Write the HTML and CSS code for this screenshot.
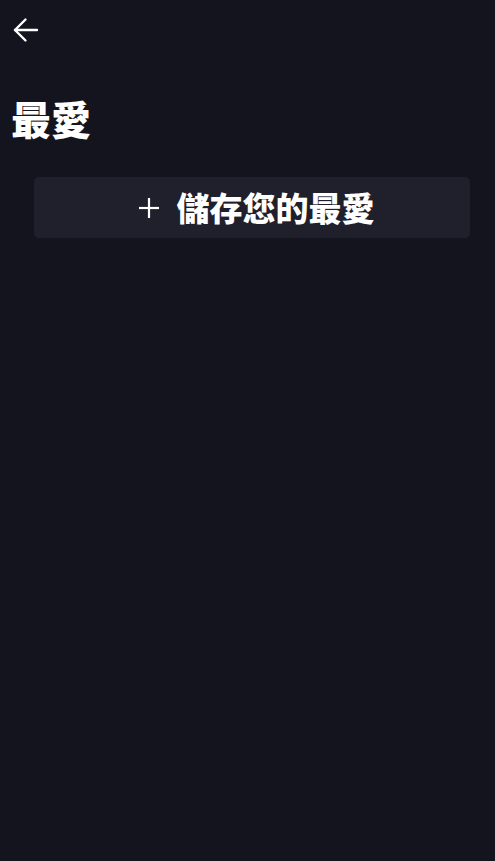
FILE: index.html
```html
<!DOCTYPE html>
<html lang="zh-Hant">
<head>
<meta charset="utf-8">
<title>最愛</title>
<link rel="stylesheet" href="styles.css">
</head>
<body>
<header class="top">
  <button class="back" aria-label="返回">
    <svg width="28" height="28" viewBox="0 0 28 28" fill="none" stroke="#ffffff" stroke-width="2.4" stroke-linecap="round" stroke-linejoin="round">
      <path d="M3 14H25"/>
      <path d="M13.5 3.5L3 14L13.5 24.5"/>
    </svg>
  </button>
</header>
<h1 class="title">最愛</h1>
<button class="save">
  <svg class="plus" width="22" height="22" viewBox="0 0 22 22" fill="none" stroke="#ffffff" stroke-width="2.2">
    <path d="M11 1V21"/>
    <path d="M1 11H21"/>
  </svg>
  <span class="save-label">儲存您的最愛</span>
</button>
</body>
</html>
```

FILE: styles.css
```css
html, body {
  margin: 0;
  padding: 0;
  background: #14141f;
  min-height: 100%;
}

body {
  font-family: "Noto Sans CJK TC", "Noto Sans", sans-serif;
  color: #ffffff;
}

.top {
  height: 60px;
  display: flex;
  align-items: center;
  padding-left: 12px;
}

.back {
  background: none;
  border: 0;
  padding: 0;
  width: 28px;
  height: 28px;
  display: flex;
  align-items: center;
  justify-content: center;
  cursor: pointer;
}

.title {
  margin: 38px 0 0 0;
  padding-left: 11px;
  font-size: 40px;
  line-height: 40px;
  font-weight: 900;
}

.save {
  display: flex;
  align-items: center;
  justify-content: center;
  gap: 17px;
  box-sizing: border-box;
  width: calc(100% - 59px);
  height: 61px;
  margin: 39px 25px 0 34px;
  background: #1f202b;
  border: 0;
  border-radius: 5px;
  color: #ffffff;
  font-family: "Noto Sans CJK TC", "Noto Sans", sans-serif;
  font-size: 33px;
  font-weight: 900;
  line-height: 1;
  padding: 0 0 0 8px;
}

.plus {
  flex: none;
}

.save-label {
  display: block;
}
```
